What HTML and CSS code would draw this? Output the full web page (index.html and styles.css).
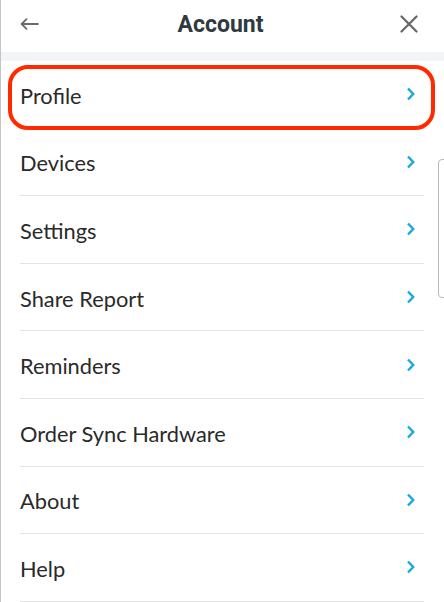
FILE: index.html
```html
<!DOCTYPE html>
<html lang="en">
<head>
<meta charset="utf-8">
<title>Account</title>
<link rel="stylesheet" href="styles.css">
</head>
<body>
<div class="panel">
  <header class="header">
    <button class="icon-btn back" aria-label="Back">
      <svg width="19" height="12" viewBox="0 0 19 12"><path d="M18 6H2M6.5 1.2L1.6 6l4.9 4.8" fill="none" stroke="#6b6b6b" stroke-width="1.8" stroke-linecap="round" stroke-linejoin="round"/></svg>
    </button>
    <h1 class="title">Account</h1>
    <button class="icon-btn close" aria-label="Close">
      <svg width="18" height="18" viewBox="0 0 18 18"><path d="M1.5 1.5l15 15M16.5 1.5l-15 15" fill="none" stroke="#666" stroke-width="2.2" stroke-linecap="round"/></svg>
    </button>
  </header>
  <div class="band"></div>
  <ul class="list">
    <li class="row"><span>Profile</span><svg class="chev" width="10" height="14" viewBox="0 0 10 14"><path d="M2 1.5L7.2 7 2 12.5" fill="none" stroke="#1ba9e1" stroke-width="2.5"/></svg></li>
    <li class="row"><span>Devices</span><svg class="chev" width="10" height="14" viewBox="0 0 10 14"><path d="M2 1.5L7.2 7 2 12.5" fill="none" stroke="#1ba9e1" stroke-width="2.5"/></svg></li>
    <li class="row"><span>Settings</span><svg class="chev" width="10" height="14" viewBox="0 0 10 14"><path d="M2 1.5L7.2 7 2 12.5" fill="none" stroke="#1ba9e1" stroke-width="2.5"/></svg></li>
    <li class="row"><span>Share Report</span><svg class="chev" width="10" height="14" viewBox="0 0 10 14"><path d="M2 1.5L7.2 7 2 12.5" fill="none" stroke="#1ba9e1" stroke-width="2.5"/></svg></li>
    <li class="row"><span>Reminders</span><svg class="chev" width="10" height="14" viewBox="0 0 10 14"><path d="M2 1.5L7.2 7 2 12.5" fill="none" stroke="#1ba9e1" stroke-width="2.5"/></svg></li>
    <li class="row"><span>Order Sync Hardware</span><svg class="chev" width="10" height="14" viewBox="0 0 10 14"><path d="M2 1.5L7.2 7 2 12.5" fill="none" stroke="#1ba9e1" stroke-width="2.5"/></svg></li>
    <li class="row"><span>About</span><svg class="chev" width="10" height="14" viewBox="0 0 10 14"><path d="M2 1.5L7.2 7 2 12.5" fill="none" stroke="#1ba9e1" stroke-width="2.5"/></svg></li>
    <li class="row"><span>Help</span><svg class="chev" width="10" height="14" viewBox="0 0 10 14"><path d="M2 1.5L7.2 7 2 12.5" fill="none" stroke="#1ba9e1" stroke-width="2.5"/></svg></li>
  </ul>
  <div class="highlight"></div>
  <div class="scrollbar"></div>
</div>
</body>
</html>
```

FILE: styles.css
```css
* { box-sizing: border-box; }
html, body {
  margin: 0;
  padding: 0;
  background: #fff;
}
body {
  width: 444px;
  height: 602px;
  overflow: hidden;
  font-family: Lato, "Open Sans", sans-serif;
}
.panel {
  position: relative;
  height: 602px;
  border-left: 1px solid #c4c4c4;
  background: #fff;
}
.header {
  height: 52px;
  display: flex;
  align-items: center;
  padding: 0 26px 4px 19px;
}
.icon-btn {
  border: 0;
  background: none;
  padding: 0;
  display: flex;
  align-items: center;
  cursor: pointer;
}
.title {
  flex: 1;
  margin: 0;
  text-align: center;
  font-family: Roboto, "Liberation Sans", sans-serif;
  font-weight: 700;
  font-size: 23px;
  color: #2e3a40;
  padding-left: 2px;
}
.band {
  height: 9px;
  background: #f3f4f6;
}
.list {
  list-style: none;
  margin: 0;
  padding: 0;
}
.row {
  height: 67.6px;
  margin: 0 20px 0 19px;
  padding-right: 8px;
  display: flex;
  align-items: center;
  justify-content: space-between;
  border-bottom: 1px solid #e4e4e4;
  font-size: 21.8px;
  color: #2a2a2a;
}
.row span { padding-top: 2px; }
.chev { display: block; }
.highlight {
  position: absolute;
  left: 7px;
  top: 65px;
  width: 427px;
  height: 65px;
  border: 4px solid #ff2a00;
  border-radius: 20px;
  pointer-events: none;
}
.scrollbar {
  position: absolute;
  right: -4px;
  top: 159px;
  width: 10px;
  height: 139px;
  border: 1px solid #b9b9b9;
  border-radius: 4px;
  background: #fff;
}
```
